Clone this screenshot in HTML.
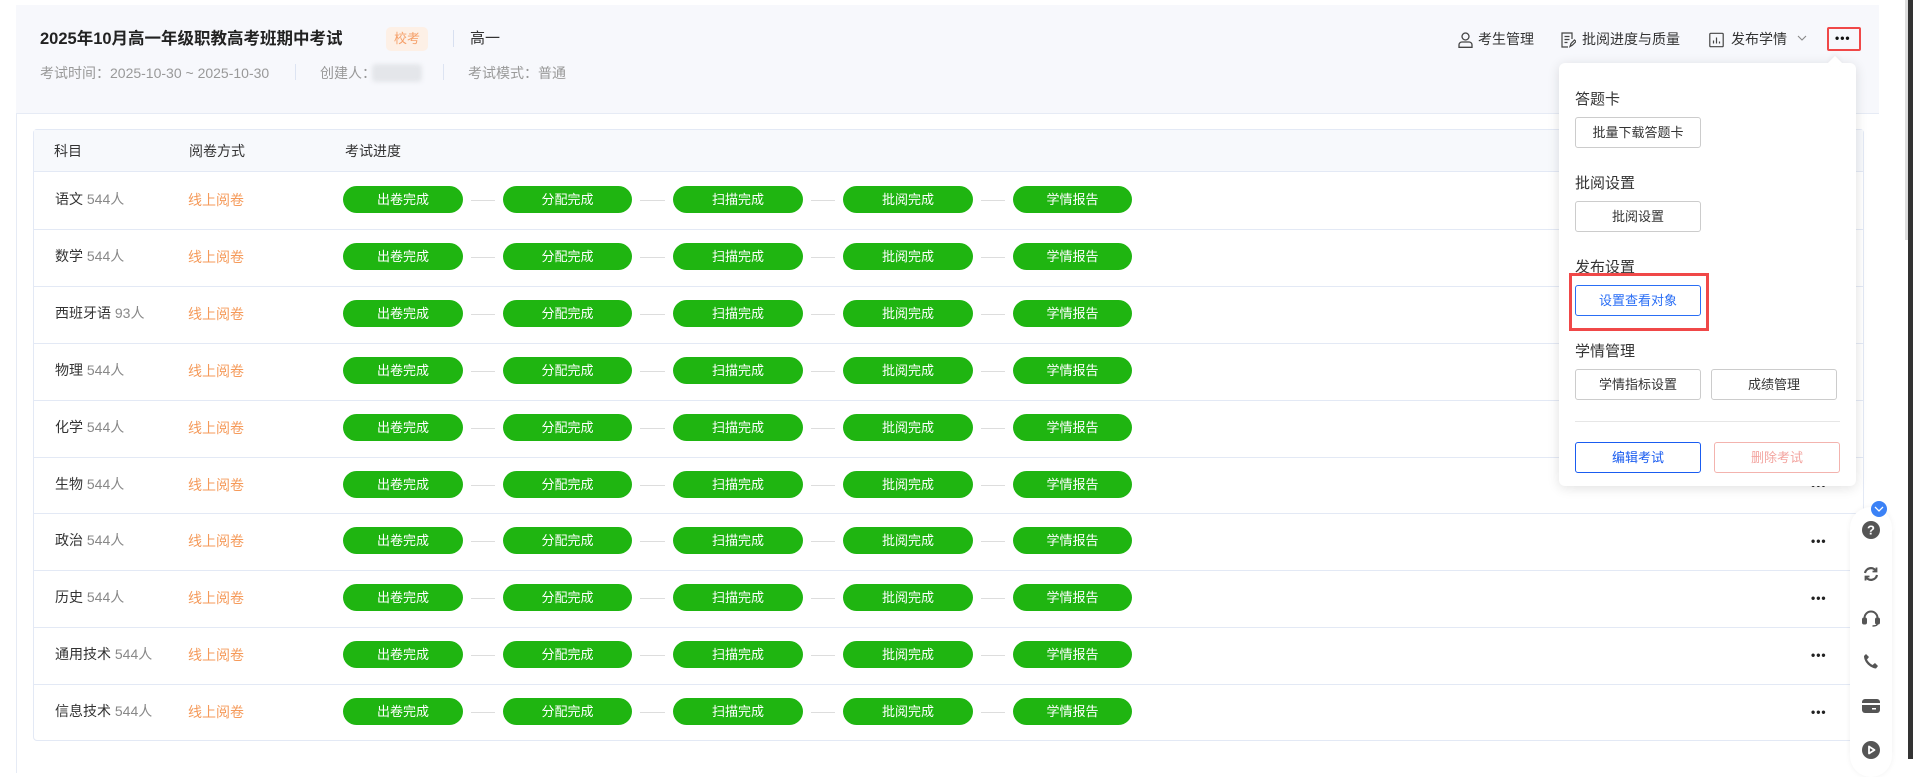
<!DOCTYPE html>
<html><head><meta charset="utf-8"><style>
*{box-sizing:border-box;margin:0;padding:0}
body{width:1913px;height:759px;overflow:hidden;background:#fff;font-family:"Liberation Sans","Noto Sans CJK SC",sans-serif;position:relative;color:#333}
.a{position:absolute;white-space:nowrap}
.hdr{left:16px;top:5px;width:1863px;height:108px;background:#f7f8fc}
.card{left:16px;top:113px;width:1863px;height:660px;background:#fff;border-left:1px solid #e6ebf5;border-top:1px solid #e6ebf5}
.tbl{left:33px;top:129px;width:1831px;height:612px;border:1px solid #e3e9f5;border-radius:4px;background:#fff}
.th{left:34px;top:130px;width:1829px;height:42px;background:#f7f9fc;border-bottom:1px solid #e3e9f5}
.rl{left:34px;width:1829px;height:1px;background:#e3e9f5}
.b{position:absolute;height:27px;border-radius:14px;background:#1fb511;color:#fff;font-size:13px;line-height:27px;text-align:center}
.ln{position:absolute;height:1px;background:#ddd}
.mb{position:absolute;height:31px;border:1px solid #ccc;border-radius:3px;font-size:13px;line-height:29px;text-align:center;color:#333;background:#fff}
.ml{position:absolute;font-size:15px;color:#333;left:1575px}
.dots{position:absolute;left:1811px;font-size:12px;font-weight:bold;letter-spacing:1px;color:#222}
</style></head><body>
<div class="a hdr"></div>
<div class="a card"></div>
<div class="a" style="left:40px;top:29px;font-size:16.5px;font-weight:bold;color:#222;line-height:21px">2025年10月高一年级职教高考班期中考试</div>
<div class="a" style="left:386px;top:27px;width:42px;height:24px;background:#fdf0e6;border-radius:5px;color:#f5a06a;font-size:13px;line-height:24px;text-align:center">校考</div>
<div class="a" style="left:453px;top:30px;width:1px;height:17px;background:#d8e0f0"></div>
<div class="a" style="left:470px;top:30px;font-size:15px;color:#333;line-height:18px">高一</div>
<div class="a" style="left:40px;top:65px;font-size:14px;color:#999;line-height:17px">考试时间：2025-10-30 ~ 2025-10-30</div>
<div class="a" style="left:295px;top:64px;width:1px;height:16px;background:#dde4f2"></div>
<div class="a" style="left:320px;top:65px;font-size:14px;color:#999;line-height:17px">创建人：</div>
<div class="a" style="left:372px;top:64px;width:50px;height:18px;background:#e4e6ea;border-radius:4px;filter:blur(2px)"></div>
<div class="a" style="left:443px;top:64px;width:1px;height:16px;background:#dde4f2"></div>
<div class="a" style="left:468px;top:65px;font-size:14px;color:#999;line-height:17px">考试模式：普通</div>

<svg class="a" style="left:1458px;top:32px" width="15" height="16" viewBox="0 0 15 16" fill="none" stroke="#444" stroke-width="1.3"><circle cx="7.5" cy="4.5" r="3.5"/><path d="M1 15.3v-2.5c0-1.5 1.3-2.8 3-2.8h7c1.7 0 3 1.3 3 2.8v2.5z"/></svg>
<div class="a" style="left:1478px;top:31px;font-size:14px;line-height:17px">考生管理</div>
<svg class="a" style="left:1561px;top:32px" width="15" height="16" viewBox="0 0 15 16" fill="none" stroke="#444" stroke-width="1.2"><path d="M11 7V1H1v14h6"/><path d="M3.5 4.5h5M3.5 7.5h5M3.5 10.5h3"/><path d="M9 14.5l1-3 3.5-3.5 1.5 1.5-3.5 3.5z"/></svg>
<div class="a" style="left:1582px;top:31px;font-size:14px;line-height:17px">批阅进度与质量</div>
<svg class="a" style="left:1709px;top:32px" width="15" height="16" viewBox="0 0 15 16" fill="none" stroke="#444" stroke-width="1.2"><rect x="0.8" y="1.3" width="13.4" height="13.4" rx="1"/><path d="M4.5 11.5v-3M7.5 11.5v-6M10.5 11.5v-2"/></svg>
<div class="a" style="left:1731px;top:31px;font-size:14px;line-height:17px">发布学情</div>
<svg class="a" style="left:1797px;top:35px" width="10" height="7" viewBox="0 0 10 7" fill="none" stroke="#888" stroke-width="1.1"><path d="M1 1l4 4 4-4"/></svg>
<div class="a" style="left:1827px;top:27px;width:34px;height:24px;border:2px solid #f04848;border-radius:2px"></div>
<div class="a" style="left:1835px;top:30px;font-size:12px;font-weight:bold;letter-spacing:1px;color:#111;line-height:16px">•••</div>

<div class="a tbl"></div>
<div class="a th"></div>
<div class="a" style="left:54px;top:143px;font-size:14px;line-height:17px">科目</div>
<div class="a" style="left:189px;top:143px;font-size:14px;line-height:17px">阅卷方式</div>
<div class="a" style="left:345px;top:143px;font-size:14px;line-height:17px">考试进度</div>

<div id="rows"></div>
<script>
var s=["语文|544人","数学|544人","西班牙语|93人","物理|544人","化学|544人","生物|544人","政治|544人","历史|544人","通用技术|544人","信息技术|544人"];
var bx=[[343,120,"出卷完成"],[503,129,"分配完成"],[673,130,"扫描完成"],[843,130,"批阅完成"],[1013,119,"学情报告"]];
var h="";
for(var i=0;i<10;i++){var t=172+i*56.9;var p=s[i].split("|");
if(i>0)h+='<div class="a rl" style="top:'+Math.round(t)+'px"></div>';
var c=Math.round(t+28);
h+='<div class="a" style="left:55px;top:'+(c-9)+'px;font-size:14px;line-height:17px">'+p[0]+' <span style="color:#888">'+p[1]+'</span></div>';
h+='<div class="a" style="left:188px;top:'+(c-8)+'px;font-size:14px;line-height:17px;color:#f59a5a">线上阅卷</div>';
for(var j=0;j<5;j++){h+='<div class="b" style="left:'+bx[j][0]+'px;top:'+(c-14)+'px;width:'+bx[j][1]+'px">'+bx[j][2]+'</div>';
if(j<4){var l=bx[j][0]+bx[j][1]+8;h+='<div class="ln" style="left:'+l+'px;top:'+c+'px;width:'+(bx[j+1][0]-l-8)+'px"></div>';}}
h+='<div class="dots" style="top:'+(c-8)+'px;line-height:16px">•••</div>';}
document.getElementById("rows").innerHTML=h;
</script>

<div class="a" style="left:1559px;top:63px;width:297px;height:423px;background:#fff;border-radius:6px;box-shadow:0 2px 12px rgba(0,0,0,.12)"></div>
<div class="a" style="left:1830px;top:58px;width:10px;height:10px;background:#fff;transform:rotate(45deg);box-shadow:-2px -2px 4px rgba(0,0,0,.04)"></div>
<div class="ml" style="top:88px">答题卡</div>
<div class="mb" style="left:1575px;top:117px;width:126px">批量下载答题卡</div>
<div class="ml" style="top:172px">批阅设置</div>
<div class="mb" style="left:1575px;top:201px;width:126px">批阅设置</div>
<div class="ml" style="top:256px">发布设置</div>
<div class="mb" style="left:1575px;top:285px;width:126px;border-color:#2a6ef5;color:#2a6ef5">设置查看对象</div>
<div class="a" style="left:1569px;top:273px;width:140px;height:58px;border:3px solid #f04848"></div>
<div class="ml" style="top:340px">学情管理</div>
<div class="mb" style="left:1575px;top:369px;width:126px">学情指标设置</div>
<div class="mb" style="left:1711px;top:369px;width:126px">成绩管理</div>
<div class="a" style="left:1575px;top:421px;width:265px;height:1px;background:#e6e6e6"></div>
<div class="mb" style="left:1575px;top:442px;width:126px;border-color:#1a5cf0;color:#1a5cf0">编辑考试</div>
<div class="mb" style="left:1714px;top:442px;width:126px;border-color:#f3b3ae;color:#f3a5a0">删除考试</div>

<div class="a" style="left:1850px;top:507px;width:42px;height:270px;background:#fff;border-radius:21px;box-shadow:0 0 6px rgba(0,0,0,.06)"></div>
<div class="a" style="left:1871px;top:501px;width:16px;height:16px;border-radius:50%;background:#3b82f6"></div>
<svg class="a" style="left:1874px;top:506px" width="10" height="6" viewBox="0 0 10 6" fill="none" stroke="#fff" stroke-width="1.3"><path d="M1 1l4 4 4-4"/></svg>
<svg class="a" style="left:1862px;top:521px" width="18" height="18" viewBox="0 0 18 18"><circle cx="9" cy="9" r="9" fill="#555"/><text x="9" y="13.5" text-anchor="middle" font-size="13" font-weight="bold" fill="#fff" font-family="Liberation Sans">?</text></svg>
<svg class="a" style="left:1863px;top:566px" width="16" height="16" viewBox="0 0 16 16" fill="none" stroke="#555" stroke-width="2.2"><path d="M2 7a6 6 0 0 1 11-2"/><path d="M14 9a6 6 0 0 1-11 2"/><path d="M13.5 1.5v4h-4" stroke-width="1.8"/><path d="M2.5 14.5v-4h4" stroke-width="1.8"/></svg>
<svg class="a" style="left:1862px;top:609px" width="18" height="18" viewBox="0 0 18 18" fill="none" stroke="#555" stroke-width="2"><path d="M2.5 11V9a6.5 6.5 0 0 1 13 0v2"/><rect x="1" y="9.5" width="3" height="5" rx="1" fill="#555"/><rect x="14" y="9.5" width="3" height="5" rx="1" fill="#555"/><path d="M15.5 14.5c0 2-2 2.5-5 2.5" stroke-width="1.4"/></svg>
<svg class="a" style="left:1863px;top:653px" width="16" height="16" viewBox="0 0 16 16"><path d="M3 1l3 3-2 2.5c1 2 3.5 4.5 5.5 5.5l2.5-2 3 3-2 2.5C7 15 1 9 1 3z" fill="#555"/></svg>
<svg class="a" style="left:1862px;top:699px" width="18" height="14" viewBox="0 0 18 14"><rect x="0" y="0" width="18" height="14" rx="3" fill="#555"/><rect x="0" y="4" width="18" height="2" fill="#fff"/><rect x="10" y="9" width="4" height="1.5" fill="#fff"/></svg>
<svg class="a" style="left:1862px;top:741px" width="18" height="18" viewBox="0 0 18 18"><circle cx="9" cy="9" r="9" fill="#555"/><path d="M7 5.5v7l5.5-3.5z" fill="none" stroke="#fff" stroke-width="1.8" stroke-linejoin="round"/></svg>
<div class="a" style="left:1905px;top:0;width:3px;height:240px;background:#ddd"></div>
<div class="a" style="left:1908px;top:0;width:5px;height:759px;background:#333"></div>
</body></html>
